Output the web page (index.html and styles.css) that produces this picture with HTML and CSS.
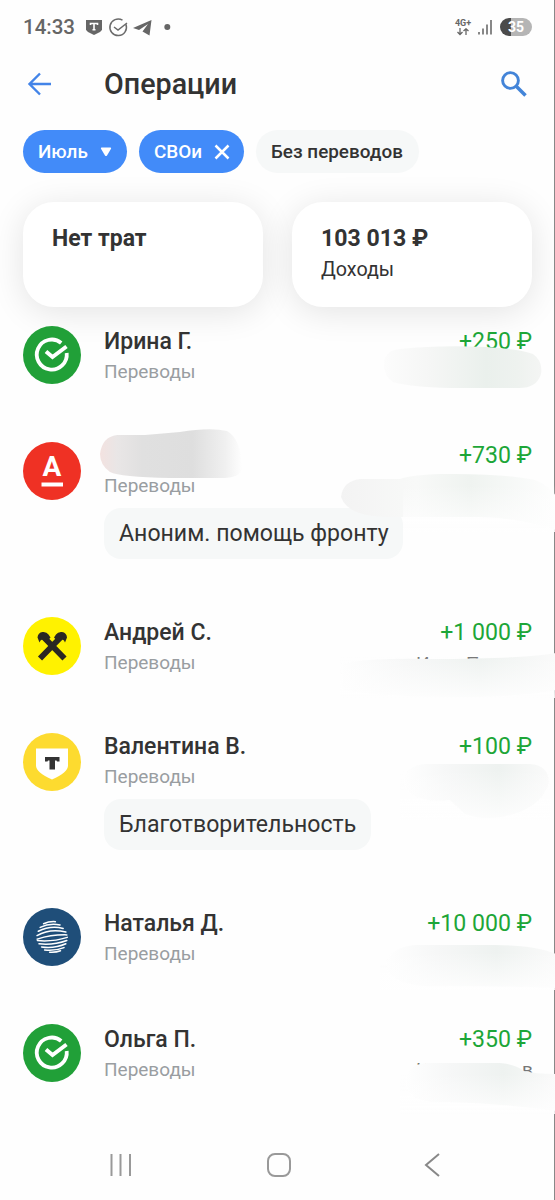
FILE: index.html
```
<!DOCTYPE html>
<html lang="ru">
<head>
<meta charset="utf-8">
<title>Операции</title>
<link rel="stylesheet" href="styles.css">
</head>
<body>
<div class="screen">
  <div class="statusbar">
    <span class="clock">14:33</span>
    <svg class="status-left" width="90" height="22" viewBox="0 0 90 22">
      <path d="M1 4h16v9.500q0 2-8 5.500q-8-3.500-8-5.500z" fill="#666"/>
      <path d="M5.500 9V7.500h7V9M9 7.500v6.500M7.500 13.800h3" stroke="#fff" stroke-width="1.600" fill="none"/>
      <path d="M41 8.500A8.300 8.300 0 1 1 37.500 4.200M29 11l4 3 9-7" stroke="#6b6b6b" stroke-width="1.500" fill="none"/>
      <path d="M48 12 66.500 4 64.500 19.500 57.500 15.500 63 8 54 14z" fill="#666"/>
      <circle cx="82.300" cy="11" r="3" fill="#666"/>
    </svg>
    <div class="network"><span>4G+</span>
      <svg width="14" height="8" viewBox="0 0 14 8"><path d="M4 0v6M1.500 4 4 6.500 6.500 4M10 7V1M7.500 3 10 .8 12.500 3" stroke="#666" stroke-width="1.300" fill="none"/></svg>
    </div>
    <svg class="signal" width="16" height="16" viewBox="0 0 16 16"><path d="M2 13v2.500M6 9.500v6M10 5.500v10M14 1v14.500" stroke="#888" stroke-width="2"/></svg>
    <div class="battery">35</div>
  </div>

  <header class="header">
    <svg width="26" height="26" viewBox="0 0 26 26"><path d="M14 2.500 3.500 13 14 23.500M3.500 13H25" stroke="#4384e8" stroke-width="2.400" fill="none"/></svg>
    <h1>Операции</h1>
    <svg class="search" width="28" height="28" viewBox="0 0 28 28"><circle cx="10.500" cy="10.500" r="7.900" stroke="#4384d8" stroke-width="2.900" fill="none"/><path d="m16.500 16.500 9 9" stroke="#4384d8" stroke-width="3.600"/></svg>
  </header>

  <div class="filters">
    <div class="chip month">Июль <svg width="12" height="10" viewBox="0 0 12 10"><path d="M1.500.500h9q1 .200.500 1.200L7 8.500q-1 1-2 0L1 1.700Q.500.700 1.500.500z" fill="#fff"/></svg></div>
    <div class="chip group">СВОи <svg width="16" height="16" viewBox="0 0 16 16"><path d="m1.500 1.500 13 13m0-13-13 13" stroke="#fff" stroke-width="2.500"/></svg></div>
    <div class="chip plain">Без переводов</div>
  </div>

  <div class="cards">
    <div class="card"><b>Нет трат</b></div>
    <div class="card"><b class="total">103 013 ₽</b><span>Доходы</span></div>
  </div>

  <main class="list">
    <div class="row">
      <svg class="avatar" viewBox="0 0 58 58"><circle cx="29" cy="29" r="29" fill="#21a038"/><path d="M38.200 16.900A15 15 0 1 0 43.700 27" stroke="#fff" stroke-width="3.800" fill="none"/><path d="m23 25.500 6.500 5.500L43.500 20.500" stroke="#fff" stroke-width="4" fill="none"/></svg>
      <div class="info"><div class="name">Ирина Г.</div><div class="category">Переводы</div></div>
      <div class="amount">+250 ₽</div>
    </div>
    <div class="row long">
      <svg class="avatar" viewBox="0 0 58 58"><circle cx="29" cy="29" r="29" fill="#ef3124"/><text class="alfa" x="29" y="34" text-anchor="middle">А</text><path d="M18.500 42.500h21.500" stroke="#fff" stroke-width="4"/></svg>
      <div class="info"><div class="name"></div><div class="category">Переводы</div><div class="message m1">Аноним. помощь фронту</div></div>
      <div class="amount">+730 ₽</div>
    </div>
    <div class="row">
      <svg class="avatar" viewBox="0 0 58 58"><circle cx="29" cy="29" r="29" fill="#fff200"/><path d="M41.500 41.500 20 19.500M17 41.500 38.500 19.500" stroke="#2a2723" stroke-width="5.800"/><path d="M14.500 20.500q.500-5 5-5.500 4-.500 6 2.500l2 3-4.500 5-3-3.500-2.500 1.500-1 2zM44 20.500q-.500-5-5-5.500-4-.500-6 2.500l-2 3 4.500 5 3-3.500 2.500 1.500 1 2z" fill="#2a2723"/></svg>
      <div class="info"><div class="name">Андрей С.</div><div class="category">Переводы</div></div>
      <div class="amount">+1 000 ₽</div>
    </div>
    <div class="row long">
      <svg class="avatar" viewBox="0 0 58 58"><circle cx="29" cy="29" r="29" fill="#fddb2f"/><path d="M13 15.500h32v17q0 7-16 14-16-7-16-14z" fill="#fff"/><path d="M22 24h14.500v4.500h-2.500l-.500-1h-1.500v9h-5.500v-9h-1.500l-.500 1H22z" fill="#333"/></svg>
      <div class="info"><div class="name">Валентина В.</div><div class="category">Переводы</div><div class="message m2">Благотворительность</div></div>
      <div class="amount">+100 ₽</div>
    </div>
    <div class="row">
      <svg class="avatar" viewBox="0 0 58 58"><circle cx="29" cy="29" r="29" fill="#1f4e79"/>
        <g transform="rotate(-10 29 29)" stroke="#fff" fill="none" stroke-width="1.500" stroke-linecap="round"><path d="M23 14.500q6-1.500 12 0"/><path d="M19 17.500q10-3 20 1"/><path d="M16.500 21q13-4 25 1.500"/><path d="M14.500 25q14-5 29 1.500"/><path d="M14 28.500q15-2 30 1"/><path d="M14 30q15 4 30 2"/><path d="M15 33.500q14 4 28 1.500"/><path d="M17 37q12 4 24.500 1"/><path d="M19.500 40.500q10 3 19.500 1"/><path d="M24 43.500q6 1.500 11 .500"/></g></svg>
      <div class="info"><div class="name">Наталья Д.</div><div class="category">Переводы</div></div>
      <div class="amount">+10 000 ₽</div>
    </div>
    <div class="row">
      <svg class="avatar" viewBox="0 0 58 58"><circle cx="29" cy="29" r="29" fill="#21a038"/><path d="M38.200 16.900A15 15 0 1 0 43.700 27" stroke="#fff" stroke-width="3.800" fill="none"/><path d="m23 25.500 6.500 5.500L43.500 20.500" stroke="#fff" stroke-width="4" fill="none"/></svg>
      <div class="info"><div class="name">Ольга П.</div><div class="category">Переводы</div></div>
      <div class="amount">+350 ₽</div>
    </div>
  </main>

  <nav class="navbar">
    <svg width="24" height="24" viewBox="0 0 24 24"><path d="M2.500 1v22M11.500 1v22M21 1v22" stroke="#999" stroke-width="2"/></svg>
    <svg width="24" height="24" viewBox="0 0 24 24"><rect x="1" y="1" width="22" height="22" rx="7" stroke="#999" stroke-width="2" fill="none"/></svg>
    <svg width="16" height="24" viewBox="0 0 16 24"><path d="M15 1 2 12l13 11" stroke="#888" stroke-width="2" fill="none"/></svg>
  </nav>

  <svg class="overlay" width="555" height="1200" viewBox="0 0 555 1200">
    <defs>
      <linearGradient id="h"><stop offset="0" stop-color="#fcfcfc"/><stop offset=".3" stop-color="#f5f6f5"/><stop offset=".65" stop-color="#eaf0ec"/><stop offset=".85" stop-color="#eef2ef"/><stop offset="1" stop-color="#f4f5f4"/></linearGradient>
      <linearGradient id="hs"><stop offset="0" stop-color="#fefefe"/><stop offset=".3" stop-color="#f6f7f7"/><stop offset=".65" stop-color="#eef2f0"/><stop offset="1" stop-color="#fafafa"/></linearGradient>
      <linearGradient id="fade" x2="0" y2="1"><stop offset="0" stop-color="#fefefe" stop-opacity="0"/><stop offset="1" stop-color="#fefefe" stop-opacity=".9"/></linearGradient>
      <linearGradient id="name"><stop offset="0" stop-color="#f3e2e0"/><stop offset=".12" stop-color="#e9e6e6"/><stop offset=".3" stop-color="#e0e0e0"/><stop offset=".65" stop-color="#dedede"/><stop offset=".88" stop-color="#f0f0f0"/><stop offset="1" stop-color="#fefefe"/></linearGradient>
      <linearGradient id="left"><stop offset="0" stop-color="#f3f3f3"/><stop offset=".35" stop-color="#f8f9f8"/><stop offset=".6" stop-color="#eff3f0"/><stop offset="1" stop-color="#fefefe"/></linearGradient>
      <filter id="soft"><feGaussianBlur stdDeviation=".6"/></filter>
    </defs>
    <path d="M554.500 0v1200" stroke="#888"/>
    <g class="fragment"><text x="416" y="670">И</text><text x="466" y="670">П</text><text x="416" y="1075.500">И</text><text x="466" y="1075.500">П</text><text x="522" y="1075.500">в</text></g>
    <g filter="url(#soft)">
      <path d="M384 362Q386 350 400 349Q440 345 485 347Q520 349 533 354Q543 361 541 374Q537 388 519 388H450Q410 387 393 382Q384 377 384 362z" fill="url(#h)"/>
      <path d="M100 454Q102 437 117 435H145L180 432Q210 427 227 431Q240 438 242 465Q244 477 225 478L170 478Q120 477 110 472Q100 465 100 454z" fill="url(#name)"/>
      <path d="M341 497Q343 481 360 479H400Q410 475 440 474Q500 473 535 480Q550 486 556 496V530Q520 518 480 517H403L390 517Q348 517 341 497z" fill="url(#left)"/>
      <path d="M403 485H556V532H403z" fill="url(#fade)"/>
      <path d="M340 664Q365 658 430 659Q520 659 556 653V690Q520 697 460 697Q380 697 344 690z" fill="url(#hs)"/>
      <path d="M340 657H560V698H340z" fill="url(#fade)"/>
      <path d="M404 778Q406 766 425 764H530Q548 765 549 782Q544 802 520 812Q490 823 465 814L450 800Q404 804 404 778z" fill="url(#hs)"/>
      <path d="M400 770H551V820H400z" fill="url(#fade)"/>
      <path d="M386 965Q388 948 415 945H495Q535 945 556 954V988Q500 986 450 986Q390 989 386 965z" fill="url(#hs)"/>
      <path d="M380 952H560V990H380z" fill="url(#fade)"/>
      <path d="M406 1080Q407 1065 426 1063H500Q515 1064 524 1071Q535 1074 556 1074V1111Q500 1103 445 1102Q406 1104 406 1080z" fill="url(#hs)"/>
      <path d="M400 1074H560V1114H400z" fill="url(#fade)"/>
    </g>
  </svg>
</div>
</body>
</html>
```
FILE: styles.css
```
* { box-sizing: border-box; }
body { margin: 0; background: #fefefe; font-family: Roboto, sans-serif; color: #333; }
.screen { position: relative; width: 555px; height: 1200px; overflow: hidden; display: flex; flex-direction: column; }
.statusbar { height: 54px; padding: 0 23px; display: flex; align-items: center; color: #666; flex: none; }
.clock { font: 500 20.5px/24px Roboto, sans-serif; width: 62px; }
.status-left { flex: none; }
.network { margin-left: auto; width: 20px; font-size: 9px; font-weight: 700; line-height: 9px; display: flex; flex-direction: column; align-items: center; }
.signal { margin: 0 7px 0 4px; }
.battery { width: 32px; height: 18px; border-radius: 9px; background: linear-gradient(90deg, #4b4b4b 34%, #b5b5b5 34%); color: #fff; font: 700 14px/18px Roboto, sans-serif; text-align: center; }
.header { height: 76px; padding: 0 27px 16px 26px; display: flex; align-items: center; flex: none; }
h1 { margin: 0 0 0 52px; font-size: 28.7px; font-weight: 500; line-height: 32px; }
.search { margin-left: auto; }
.filters { height: 43px; margin-left: 23px; display: flex; gap: 12px; flex: none; }
.chip { height: 43px; border-radius: 22px; background: #428bf9; color: #fff; font-size: 18.9px; font-weight: 500; line-height: 43px; padding: 0 15px; display: flex; align-items: center; justify-content: space-between; white-space: nowrap; }
.month { width: 104px; }
.group { width: 105px; padding-right: 14px; }
.plain { width: 163px; background: #f6f8f8; color: #333; }
.cards { margin: 29px 23px 0; display: flex; gap: 29px; flex: none; }
.card { width: 240px; height: 105px; border-radius: 31px; background: #fff; box-shadow: 0 5px 34px rgba(0,0,0,.11); padding: 23px 29px; display: flex; flex-direction: column; }
.card b { font-size: 23px; font-weight: 700; line-height: 28px; }
.card .total { font-size: 23.1px; }
.card span { font-size: 19.7px; line-height: 24px; margin-top: 5px; }
.list { margin: 19px 23px 0; height: 800px; flex: none; }
.row { height: 116px; display: flex; align-items: flex-start; }
.row.long { height: 175px; }
.avatar { width: 58px; height: 58px; flex: none; }
.info { margin-left: 23px; display: flex; flex-direction: column; align-items: flex-start; }
.row .info, .row .amount { margin-top: 1px; }
.row.long .info, .row.long .amount { margin-top: -1px; }
.name { height: 30px; font-size: 23px; line-height: 30px; font-weight: 500; white-space: nowrap; }
.category { font-size: 19px; line-height: 30px; color: #999da1; }
.message { margin-top: 7px; height: 51px; border-radius: 17px; background: #f6f8f8; font-size: 23.1px; line-height: 51px; padding: 0 15px; white-space: nowrap; }
.m1 { width: 299px; }
.m2 { width: 267px; }
.amount { margin-left: auto; font-size: 23.1px; line-height: 30px; color: #1da638; white-space: nowrap; }
.alfa { font: 700 28px Roboto, sans-serif; fill: #fff; }
.navbar { margin-top: auto; height: 70px; padding: 0 115px 0 109px; display: flex; justify-content: space-between; align-items: center; flex: none; }
.overlay { position: absolute; left: 0; top: 0; pointer-events: none; }
.fragment { font: 19px Roboto, sans-serif; fill: #777; }
```
